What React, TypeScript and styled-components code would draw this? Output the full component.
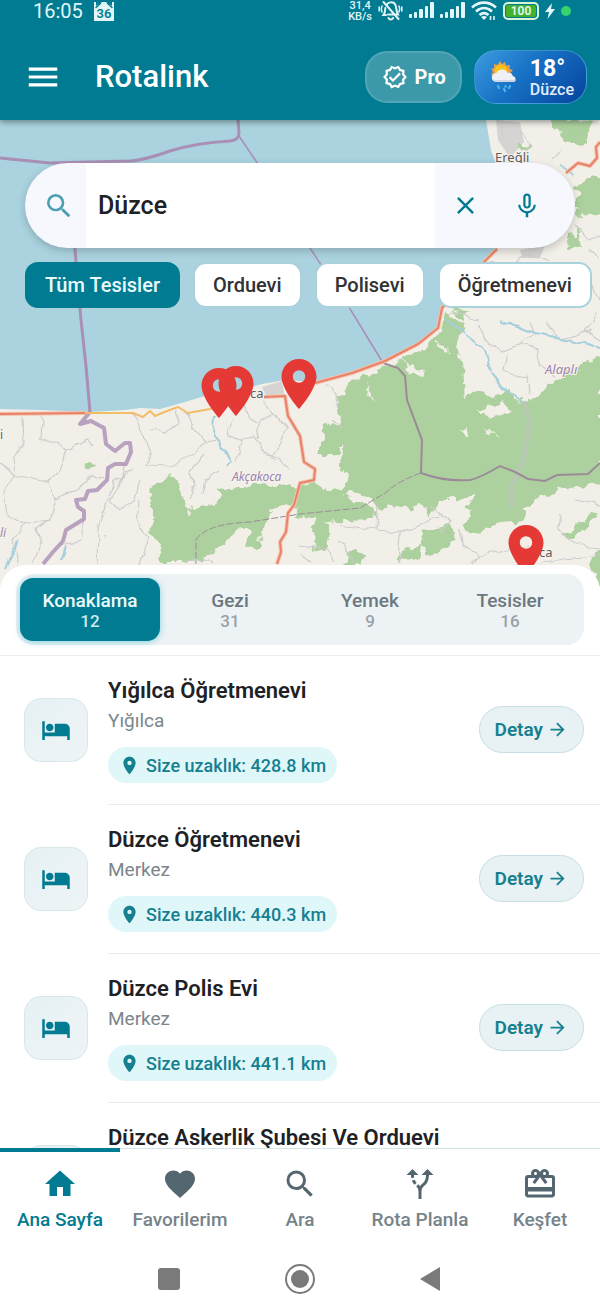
import React from "react";
import styled, { createGlobalStyle } from "styled-components";
import {
  MdMenu,
  MdOutlineVerified,
  MdSearch,
  MdClose,
  MdMicNone,
  MdHotel,
  MdLocationOn,
  MdArrowForward,
  MdHome,
  MdFavorite,
  MdAltRoute,
  MdRedeem,
} from "react-icons/md";

const teal = "#007b91";
const slate = "#546670";

const GlobalStyle = createGlobalStyle`
  *, *::before, *::after { box-sizing: border-box; }
  body { margin: 0; background: #fff; font-family: Roboto, "Noto Sans", sans-serif; color: #202124; }
  button, input { font: inherit; color: inherit; margin: 0; }
  button { border: 0; padding: 0; background: none; cursor: pointer; }
  svg { display: block; flex: none; }
`;

const Shell = styled.div`
  display: flex;
  flex-direction: column;
  height: 100vh;
  overflow: hidden;
`;

/* ---------- header ---------- */

const Header = styled.header`
  position: relative;
  z-index: 1;
  flex: none;
  background: ${teal};
  color: #fff;
  box-shadow: 0 2px 6px rgba(0, 0, 0, 0.4);
`;

const StatusBar = styled.div`
  display: flex;
  align-items: flex-start;
  justify-content: space-between;
  height: 34px;
  padding: 0 29px 0 33px;
  color: #e2f6f8;
`;

const StatusGroup = styled.div<{ $gap: number }>`
  display: flex;
  align-items: center;
  gap: ${(p) => p.$gap}px;
  height: 21px;
`;

const Clock = styled.span`
  font-size: 20px;
  line-height: 22px;
`;

const NetSpeed = styled.span`
  display: flex;
  flex-direction: column;
  font-size: 11px;
  font-weight: 500;
  line-height: 11px;
  text-align: center;
`;

const Battery = styled.span`
  width: 36px;
  height: 18px;
  border: 2px solid #d9f5d8;
  border-radius: 5px;
  background: #45b02e;
  box-shadow: inset 0 0 0 1px ${teal};
  font-size: 12px;
  font-weight: 600;
  line-height: 14px;
  text-align: center;
`;

const GreenDot = styled.span`
  width: 10px;
  height: 10px;
  border-radius: 50%;
  background: #35d56c;
`;

const Toolbar = styled.div`
  display: flex;
  align-items: center;
  height: 86px;
  padding: 0 13px 0 24px;
`;

const Brand = styled.h1`
  flex: 1;
  margin: 0 0 0 33px;
  font-size: 31px;
  font-weight: 500;
  line-height: 40px;
`;

const ProButton = styled.button`
  display: flex;
  align-items: center;
  gap: 7px;
  height: 52px;
  margin-right: 12px;
  padding: 0 14px 0 15px;
  border: 2px solid rgba(255, 255, 255, 0.12);
  border-radius: 22px;
  background: rgba(255, 255, 255, 0.23);
  font-size: 20px;
  font-weight: 700;
`;

const WeatherButton = styled.button`
  display: flex;
  align-items: center;
  gap: 11px;
  height: 54px;
  padding: 0 12px 0 16px;
  border: 1px solid rgba(80, 170, 220, 0.7);
  border-radius: 22px;
  background: linear-gradient(135deg, #3d9be0 0%, #1670c4 45%, #06439c 100%);
  text-align: left;
`;

const Degrees = styled.span`
  display: block;
  font-size: 23px;
  font-weight: 700;
  line-height: 24px;
`;

const Place = styled.span`
  display: block;
  color: #e3eefa;
  font-size: 16px;
  font-weight: 500;
  line-height: 17px;
`;

/* ---------- map ---------- */

const MapArea = styled.section`
  position: relative;
  flex: none;
  height: 467px;
  padding: 43px 0 0;
  overflow: hidden;
`;

const MapCanvas = styled.svg`
  position: absolute;
  inset: 0;
  width: 100%;
  height: 100%;
`;

const SearchBox = styled.form`
  position: relative;
  display: flex;
  height: 85px;
  margin: 0 25px;
  border-radius: 43px;
  overflow: hidden;
  background: #f7f8fe;
  box-shadow: 0 3px 9px rgba(0, 0, 0, 0.2);
  color: ${teal};
`;

const SearchLead = styled.label`
  display: flex;
  align-items: center;
  width: 61px;
  padding-left: 18px;
  color: #4b9fb0;
`;

const SearchInput = styled.input`
  flex: 1;
  min-width: 0;
  padding: 0 12px;
  border: 0;
  outline: 0;
  background: #fff;
  color: #202124;
  font-size: 25px;
  font-weight: 500;
`;

const SearchAction = styled.button`
  display: flex;
  align-items: center;
  justify-content: center;
  width: 61px;

  &:last-child {
    margin-right: 18px;
  }
`;

const Chips = styled.div`
  position: relative;
  display: flex;
  gap: 13px;
  margin-top: 14px;
  padding-left: 25px;
`;

const Chip = styled.button<{ $active?: boolean }>`
  flex: none;
  height: 46px;
  padding: 0 18px;
  border: 2px solid ${(p) => (p.$active ? teal : "#a9d2dd")};
  border-radius: 13px;
  background: ${(p) => (p.$active ? teal : "#fff")};
  color: ${(p) => (p.$active ? "#e9fafc" : "#303234")};
  font-size: 20px;
  font-weight: 500;
`;

/* ---------- sheet ---------- */

const Sheet = styled.main`
  position: relative;
  z-index: 1;
  display: flex;
  flex: 1;
  flex-direction: column;
  min-height: 0;
  margin-top: -22px;
  border-radius: 26px 26px 0 0;
  background: #fff;
`;

const TabStrip = styled.div`
  flex: none;
  padding: 9px 16px 10px;
  border-bottom: 1px solid #e9eef0;
`;

const Tabs = styled.div`
  display: flex;
  padding: 4px;
  border-radius: 18px;
  background: #edf2f5;
`;

const Tab = styled.button<{ $active?: boolean }>`
  flex: 1;
  height: 63px;
  border-radius: 13px;
  background: ${(p) => (p.$active ? teal : "transparent")};
  box-shadow: ${(p) => (p.$active ? "0 1px 6px rgba(0, 172, 193, 0.45)" : "none")};
  color: ${(p) => (p.$active ? "#e9fafc" : "#6c787f")};
`;

const TabName = styled.span`
  display: block;
  font-size: 19px;
  font-weight: 500;
  line-height: 22px;
`;

const TabCount = styled.span<{ $active?: boolean }>`
  display: block;
  color: ${(p) => (p.$active ? "#cdeaef" : "#98a2a8")};
  font-size: 17px;
  font-weight: 500;
  line-height: 18px;
`;

const List = styled.ul`
  flex: 1;
  min-height: 0;
  margin: 0;
  padding: 0;
  overflow: hidden;
  list-style: none;
`;

const Row = styled.li`
  display: flex;
  align-items: flex-start;
  gap: 20px;
  padding-left: 24px;
`;

const IconTile = styled.span`
  display: flex;
  flex: none;
  align-items: center;
  justify-content: center;
  width: 64px;
  height: 64px;
  margin-top: 42px;
  border: 1px solid #d8e7ea;
  border-radius: 17px;
  background: linear-gradient(135deg, #e6f1f4, #eef4f6);
  color: ${teal};
`;

const RowBody = styled.div`
  display: flex;
  flex: 1;
  align-items: flex-start;
  justify-content: space-between;
  height: 149px;
  padding: 20px 16px 0 0;
  border-bottom: 1px solid #e9ebec;
`;

const Title = styled.h2`
  margin: 0;
  font-size: 22px;
  font-weight: 600;
  line-height: 30px;
`;

const Town = styled.p`
  margin: 0 0 11px;
  color: #7b868b;
  font-size: 19px;
  line-height: 30px;
`;

const Distance = styled.span`
  display: inline-flex;
  align-items: center;
  gap: 6px;
  height: 36px;
  padding: 0 11px;
  border-radius: 18px;
  background: #e0f7fa;
  color: #15808f;
  font-size: 18px;
  font-weight: 500;
`;

const DetailButton = styled.button`
  display: flex;
  align-items: center;
  gap: 4px;
  height: 47px;
  margin-top: 30px;
  padding: 0 15px;
  border: 1px solid #c5dee3;
  border-radius: 24px;
  background: #e8f2f5;
  color: #15808f;
  font-size: 19px;
  font-weight: 600;
`;

/* ---------- bottom bars ---------- */

const BottomNav = styled.nav`
  display: flex;
  flex: none;
  height: 111px;
  border-top: 1px solid #d3e4e7;
  background: #fff;
`;

const NavLink = styled.a<{ $active?: boolean }>`
  display: flex;
  flex: 1 1 0;
  flex-direction: column;
  align-items: center;
  gap: 6px;
  margin-top: -1px;
  padding-top: 14px;
  border-top: 4px solid ${(p) => (p.$active ? teal : "transparent")};
  color: ${(p) => (p.$active ? teal : slate)};
  font-size: 19px;
  font-weight: 500;
  line-height: 24px;
  text-decoration: none;
  white-space: nowrap;
`;

const NavLabel = styled.span<{ $active?: boolean }>`
  color: ${(p) => (p.$active ? teal : "#76838a")};
`;

const SystemBar = styled.div`
  display: flex;
  flex: none;
  align-items: center;
  justify-content: center;
  gap: 99px;
  height: 40px;
  background: #fff;
`;

const SystemButton = styled.button`
  display: flex;
  width: 32px;
  height: 32px;
`;

/* ---------- drawings ---------- */

const HomeBadge = () => (
  <svg width="20" height="20" viewBox="0 0 20 20">
    <path d="M0 1h2v4l6-4h4l6 4V1h2v19H0z" fill="#e2f6f8" />
    <path d="M1.500 7L7 2M18.500 7L13 2" stroke={teal} strokeWidth="1.400" fill="none" />
    <text x="10" y="17" textAnchor="middle" fontFamily="Roboto, sans-serif" fontSize="13" fontWeight="600" fill={teal}>
      36
    </text>
  </svg>
);

const MutedBell = () => (
  <svg width="25" height="20" viewBox="0 0 25 20" fill="none" stroke="#e2f6f8" strokeWidth="2" strokeLinecap="round">
    <path d="M8.500 4c1.500-3 7-4 9 0 1 3 .6 6 2.500 9.500H10M8 14H5.500c2-2.500 1.500-4.500 1.800-7M10.500 17c1 2 3.500 2 4.500 0" />
    <path d="M5.500 1l15 17" />
    <path d="M4 5c-1 2-1 4 0 6M1.200 6v4M21 5c1 2 1 4 0 6M23.800 6v4" strokeWidth="1.600" />
  </svg>
);

const Signal = () => (
  <svg width="25" height="17" viewBox="0 0 25 17" fill="#e2f6f8">
    <rect x="0" y="12" width="3" height="4" rx="1" />
    <rect x="5" y="10" width="3" height="6" rx="1" />
    <rect x="10" y="7" width="4" height="9" rx="1" />
    <rect x="16" y="4" width="3" height="12" rx="1" />
    <rect x="21" y="0" width="4" height="16" rx="1" />
  </svg>
);

const Wifi = () => (
  <svg width="26" height="20" viewBox="0 0 26 20" fill="none" stroke="#e2f6f8" strokeWidth="2.600">
    <path d="M1 6.500c7-6.500 17-6.500 24 0M5 10.500c5-4.500 11-4.500 16 0M8.500 14c3-2.500 6-2.500 9 0" />
    <path d="M13 19l-3-3c2-1.500 4-1.500 6 0z" fill="#e2f6f8" stroke="none" />
    <path d="M19.500 19v-4M23 15v4" strokeWidth="1.600" />
  </svg>
);

const Bolt = () => (
  <svg width="10" height="16" viewBox="0 0 10 16" fill="#e2f6f8">
    <path d="M7 0L0 9h4l-1.500 7L10 6H6z" />
  </svg>
);

const WeatherIcon = () => (
  <svg width="28" height="32" viewBox="0 0 28 32">
    <path
      d="M9 0l2 3 3-2 1 3.500L19 4l-.5 4 3.500 1-3 3v6H4l-1-3-3-1 2-3-2-3 3-1V3l3.500 1z"
      fill="#e2a14a"
    />
    <circle cx="10" cy="10" r="6.500" fill="#fcc419" />
    <path d="M5 21a4.500 4.500 0 0 1 .5-9c1-4 9-5.500 11 0 3-1 5 .5 5.200 3 4 .5 3.600 6 0 6z" fill="#eef0f5" />
    <path d="M2.500 19c1 1.500 2 2 3.500 2h16c1.500 0 2.500-1 3-2z" fill="#cfd5e2" />
    <path d="M7 25l1 2M13 28l1 2M19 25l-1 2M14.500 25v1" stroke="#4db4ee" strokeWidth="2.200" strokeLinecap="round" />
  </svg>
);

const pins = [
  { x: 219, y: 418 },
  { x: 236, y: 416 },
  { x: 299, y: 409 },
  { x: 526, y: 575 },
];

const minorRoads = [
  "M21 416L22 445 12 458 14 475 0 462M42 416L41 440 60 446 66 450 75 446 86 440 95 446M66 450L60 470 48 482 14 475",
  "M14 475L5 495 8 515 25 525 50 520 56 500 48 482M56 500L75 490 95 475 103 480M25 525L14 540 18 563",
  "M50 520L36 530 40 545 32 563M85 520L80 540 60 545M105 505L115 480 133 468M105 505L98 530 97 563",
  "M133 413L140 425 150 450 146 465 170 466 195 452 205 440 214 438M150 430L165 433 176 422 178 410",
  "M186 412L195 430 205 440M232 420L228 434 240 440 236 460M240 440L255 438 265 452 275 462",
  "M262 400L275 413 262 420 258 440M275 413L285 425 283 440 270 455 290 468M245 404L250 420 258 425",
  "M205 455L192 470 195 485 188 500M220 470L205 478 202 495M125 466L120 480 110 500 120 510 135 500 140 480",
  "M140 500L138 530 148 540 140 563M186 560L205 558 212 563M325 382L335 395 338 405M340 428L330 420",
  "M378 508L377 530 400 532 420 525 440 515M377 530L340 525M400 532L398 563M430 505L450 520 440 530",
  "M460 530L462 545 480 555 500 552 530 545M480 555L470 563M560 515L558 530 575 545 600 548M540 563L600 556",
  "M478 323L486 340 500 350 520 344 535 335 530 322M520 344L540 350 538 365 555 375M505 355L503 372 525 376 530 395",
  "M545 323L560 338 590 330M340 540L355 563M300 545L325 548 335 563M310 563L300 555M575 500L600 505",
  "M490 260L510 265 530 255 550 262M575 225L590 240 600 236M592 285L600 300M588 250L600 262M520 130L530 142 525 155",
  "M560 150L550 160M500 125L505 140M450 312L480 318M595 312L585 330 600 340",
];

const forests = [
  "M444 312L462 322 458 345 462 370 465 398 478 392 494 396 508 390 525 402 545 392 562 376 585 362 602 358V482L560 490 540 497 524 508 526 520 500 522 480 535 466 530 468 510 473 494 455 498 438 504 428 518 412 512 400 506 380 508 370 496 350 494 335 500 315 498 300 510 290 500 296 485 315 482 325 490 345 488 350 478 340 465 344 445 332 455 318 455 322 438 324 425 340 424 336 405 345 390 362 375 395 362 428 345 440 330z",
  "M150 488L172 475 182 484 187 512 200 505 218 500 217 488 232 490 255 484 300 486 294 504 270 510 264 530 255 550 247 545 250 532 240 526 226 545 208 556 185 564H160L163 545 150 535 154 520 147 500z",
  "M316 520L326 525 327 545 316 550 312 535zM352 548L366 552 360 566H340zM424 530L445 525 455 532 448 550 430 556 420 545z",
  "M420 400L440 404 430 412zM563 535L590 512 600 515 570 540zM592 555L602 550V588L590 566zM84 463L93 460 95 467 87 470z",
  "M547 120H592L584 145 572 146 555 130zM576 186L592 176 602 180V212L588 218 576 212zM565 235L582 232 584 250 570 248z",
  "M520 145L532 146 530 151 518 150zM450 310L470 312 462 320zM103 538L107 541 104 542zM300 500L330 492 375 510 372 520 320 522 298 515zM400 548L420 545 418 560 400 563z",
];

const clearings = [
  "M400 360L420 370 426 378 412 372zM435 340L445 352 448 350zM366 380L375 402 370 396zM476 410L500 404 512 412 490 416zM462 430L470 426 466 438zM484 430L500 437 486 434zM322 480L345 470 342 490zM394 522L420 505 432 503 425 520 400 535z",
];

const CoastMap = () => (
  <MapCanvas viewBox="0 120 600 467" preserveAspectRatio="xMidYMid slice" role="img" aria-label="Harita">
    <defs>
      <filter id="rough" x="-5%" y="-5%" width="110%" height="110%">
        <feTurbulence type="fractalNoise" baseFrequency="0.09" numOctaves="3" seed="4" />
        <feDisplacementMap in="SourceGraphic" scale="14" xChannelSelector="R" yChannelSelector="G" />
      </filter>
      <filter id="wobble" x="-5%" y="-5%" width="110%" height="110%">
        <feTurbulence type="fractalNoise" baseFrequency="0.06" numOctaves="2" seed="9" />
        <feDisplacementMap in="SourceGraphic" scale="10" xChannelSelector="R" yChannelSelector="G" />
      </filter>
    </defs>
    <rect x="-600" y="120" width="1800" height="467" fill="#aad3df" />
    <path
      d="M-600 409H0L40 410 90 412 125 410 140 408 160 409 185 402 205 396 240 390 262 384 285 380 316 382 352 373 385 362 418 345 438 328 441 308 470 275 497 249 512 215 500 175 491 150 486 120H1200V587H-600z"
      fill="#f2efe9"
    />
    <path d="M496 120L520 122 524 142 510 158 498 140zM520 250L545 245 540 258 522 258zM262 387L282 381 284 394 266 396z" fill="#d6d4d3" />
    <g fill="#add19e" filter="url(#rough)">
      {forests.map((d) => (
        <path key={d} d={d} />
      ))}
    </g>
    <g fill="#f2efe9" filter="url(#rough)">
      {clearings.map((d) => (
        <path key={d} d={d} />
      ))}
    </g>
    <g fill="none" stroke="#cfccce" strokeWidth="1.200" filter="url(#wobble)">
      {minorRoads.map((d) => (
        <path key={d} d={d} />
      ))}
    </g>
    <g fill="none" stroke="#a5cfdd" strokeWidth="2" filter="url(#wobble)">
      <path d="M215 416L214 435 222 450 231 460 226 466M446 320L462 332 478 345 486 350 492 375 503 388 525 402M500 320L535 333 570 340 600 348M20 540L10 556 5 568M66 545L62 562M574 175L560 166" />
    </g>
    <path d="M525 402L529 420 527 440 523 462 512 485 511 508" fill="none" stroke="#b8c7b6" strokeWidth="4" />
    <g fill="none" stroke="#a98fb5" strokeLinejoin="round">
      <path d="M238 120L239 133Q239 140 230 141 195 143 170 151 145 160 130 161L50 163 0 158" strokeWidth="3" />
      <path d="M239 136L258 164 310 248 352 312 383 363" strokeWidth="1.500" />
      <path d="M72 163L75 250 81 320 86 366 90 412" strokeWidth="3" />
      <path
        d="M90 412L80 424 91 421 104 428 106 444 115 451 125 443 130 443 131 452 126 464 115 464 108 468 107 480 97 490 88 491 85 499 76 500 78 507 84 511 84 519 66 530 63 541 53 552 43 564"
        strokeWidth="4"
        opacity="0.8"
      />
    </g>
    <g fill="none" stroke="#9b8b98" strokeWidth="2">
      <path d="M383 363L398 368 405 376 407 400 422 440 421 473Q445 482 470 480 480 478 500 466L515 472 528 479 545 481 557 475 588 474 600 463" />
      <path d="M421 473Q400 480 385 493L360 508 300 514 250 522 Q205 524 196 540L196 564" strokeWidth="1" strokeDasharray="7 2" />
    </g>
    <g fill="none" strokeLinejoin="round">
      <path d="M0 414L85 413M264 397L285 396 288 416 300 436 304 462 315 469 314 480 300 483 294 505 288 513 286 532 280 542 281 552 277 564M315 383L352 373 385 361 418 344 438 328 442 308 468 278 497 249M566 173L578 163 590 166 597 158 596 147 600 142" stroke="#f4c3ab" strokeWidth="4" />
      <path d="M0 414L85 413M264 397L285 396 288 416 300 436 304 462 315 469 314 480 300 483 294 505 288 513 286 532 280 542 281 552 277 564M315 383L352 373 385 361 418 344 438 328 442 308 468 278 497 249M566 173L578 163 590 166 597 158 596 147 600 142" stroke="#e8826b" strokeWidth="2" />
      <path d="M85 413L133 413 143 417 150 411 155 416 167 411 178 407 188 413 210 409 225 405" stroke="#f3bd68" strokeWidth="2" />
    </g>
    <g fontFamily='"Noto Sans", sans-serif' stroke="#f6f3ef" strokeWidth="2" paintOrder="stroke">
      <g fontSize="12" fill="#5d5d5d">
        <text x="495" y="162" fontSize="13">Ereğli</text>
        <text x="250" y="398" fontSize="13">ca</text>
        <text x="539" y="557" fontSize="13">ca</text>
        <text x="0" y="439">i</text>
      </g>
      <g fontSize="12" fontStyle="italic" fill="#9c83ad">
        <text x="545" y="374" fontSize="13">Alaplı</text>
        <text x="232" y="481">Akçakoca</text>
        <text x="0" y="537">li</text>
      </g>
    </g>
    {pins.map((pin) => (
      <path
        key={pin.x}
        transform={`translate(${pin.x - 30} ${pin.y - 55}) scale(2.5)`}
        d="M12 2C8.130 2 5 5.130 5 9c0 5.250 7 13 7 13s7-7.750 7-13c0-3.870-3.130-7-7-7zm0 9.500a2.500 2.500 0 0 1 0-5 2.500 2.500 0 0 1 0 5z"
        fill="#e53935"
      />
    ))}
  </MapCanvas>
);

/* ---------- data ---------- */

const filters = ["Tüm Tesisler", "Orduevi", "Polisevi", "Öğretmenevi"];

const tabs = [
  { name: "Konaklama", count: 12 },
  { name: "Gezi", count: 31 },
  { name: "Yemek", count: 9 },
  { name: "Tesisler", count: 16 },
];

interface Lodging {
  title: string;
  town?: string;
  km?: string;
}

const places: Lodging[] = [
  { title: "Yığılca Öğretmenevi", town: "Yığılca", km: "428.8" },
  { title: "Düzce Öğretmenevi", town: "Merkez", km: "440.3" },
  { title: "Düzce Polis Evi", town: "Merkez", km: "441.1" },
  { title: "Düzce Askerlik Şubesi Ve Orduevi" },
];

const navItems = [
  { label: "Ana Sayfa", Icon: MdHome },
  { label: "Favorilerim", Icon: MdFavorite },
  { label: "Ara", Icon: MdSearch },
  { label: "Rota Planla", Icon: MdAltRoute },
  { label: "Keşfet", Icon: MdRedeem },
];

export default function App() {
  return (
    <Shell>
      <GlobalStyle />
      <Header>
        <StatusBar>
          <StatusGroup $gap={11}>
            <Clock>16:05</Clock>
            <HomeBadge />
          </StatusGroup>
          <StatusGroup $gap={6}>
            <NetSpeed>
              <span>31,4</span>
              <span>KB/s</span>
            </NetSpeed>
            <MutedBell />
            <Signal />
            <Signal />
            <Wifi />
            <Battery>100</Battery>
            <Bolt />
            <GreenDot />
          </StatusGroup>
        </StatusBar>
        <Toolbar>
          <button type="button" aria-label="Menü">
            <MdMenu size={38} />
          </button>
          <Brand>Rotalink</Brand>
          <ProButton type="button">
            <MdOutlineVerified size={26} />
            Pro
          </ProButton>
          <WeatherButton type="button">
            <WeatherIcon />
            <span>
              <Degrees>18°</Degrees>
              <Place>Düzce</Place>
            </span>
          </WeatherButton>
        </Toolbar>
      </Header>

      <MapArea>
        <CoastMap />
        <SearchBox onSubmit={(e) => e.preventDefault()}>
          <SearchLead htmlFor="place-search" aria-label="Yer ara">
            <MdSearch size={32} />
          </SearchLead>
          <SearchInput id="place-search" type="text" defaultValue="Düzce" />
          <SearchAction type="button" aria-label="Temizle">
            <MdClose size={29} />
          </SearchAction>
          <SearchAction type="button" aria-label="Sesli arama">
            <MdMicNone size={30} />
          </SearchAction>
        </SearchBox>
        <Chips>
          {filters.map((name, i) => (
            <Chip key={name} type="button" $active={i === 0}>
              {name}
            </Chip>
          ))}
        </Chips>
      </MapArea>

      <Sheet>
        <TabStrip>
          <Tabs role="tablist">
            {tabs.map((tab, i) => (
              <Tab key={tab.name} type="button" role="tab" aria-selected={i === 0} $active={i === 0}>
                <TabName>{tab.name}</TabName>
                <TabCount $active={i === 0}>{tab.count}</TabCount>
              </Tab>
            ))}
          </Tabs>
        </TabStrip>
        <List>
          {places.map((place) => (
            <Row key={place.title}>
              <IconTile>
                <MdHotel size={30} />
              </IconTile>
              <RowBody>
                <div>
                  <Title>{place.title}</Title>
                  {place.town && <Town>{place.town}</Town>}
                  {place.km && (
                    <Distance>
                      <MdLocationOn size={21} />
                      Size uzaklık: {place.km} km
                    </Distance>
                  )}
                </div>
                {place.km && (
                  <DetailButton type="button">
                    Detay
                    <MdArrowForward size={21} />
                  </DetailButton>
                )}
              </RowBody>
            </Row>
          ))}
        </List>
      </Sheet>

      <BottomNav>
        {navItems.map(({ label, Icon }, i) => (
          <NavLink key={label} href="#" $active={i === 0}>
            <Icon size={36} />
            <NavLabel $active={i === 0}>{label}</NavLabel>
          </NavLink>
        ))}
      </BottomNav>
      <SystemBar>
        <SystemButton type="button" aria-label="Son uygulamalar">
          <svg width="32" height="32" viewBox="0 0 32 32">
            <rect x="5" y="5" width="22" height="22" rx="3" fill="#7a7a7a" />
          </svg>
        </SystemButton>
        <SystemButton type="button" aria-label="Ana ekran">
          <svg width="32" height="32" viewBox="0 0 32 32">
            <circle cx="16" cy="16" r="14" fill="none" stroke="#7a7a7a" strokeWidth="2" />
            <circle cx="16" cy="16" r="9" fill="#7a7a7a" />
          </svg>
        </SystemButton>
        <SystemButton type="button" aria-label="Geri">
          <svg width="32" height="32" viewBox="0 0 32 32">
            <path d="M5 16L25 4v24z" fill="#7a7a7a" />
          </svg>
        </SystemButton>
      </SystemBar>
    </Shell>
  );
}
